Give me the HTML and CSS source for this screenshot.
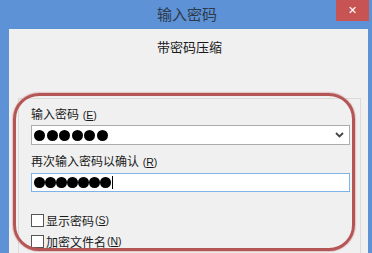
FILE: index.html
```html
<!DOCTYPE html>
<html lang="zh">
<head>
<meta charset="utf-8">
<link rel="stylesheet" href="styles.css">
</head>
<body>
<div class="window">
  <div class="titlebar">
    <span></span>
    <span class="title">输入密码</span>
    <span class="close-wrap"><span class="close">✕</span></span>
  </div>
  <div class="client">
    <div class="subtitle">带密码压缩</div>
    <div class="group">
      <div class="label">输入密码 <span class="mn">(<u>E</u>)</span></div>
      <div class="input combo">
        <span class="dots wide"><i></i><i></i><i></i><i></i><i></i><i></i></span>
        <svg class="chev" width="9" height="6" viewBox="0 0 9 6"><path d="M1 1 L4.5 4.5 L8 1" fill="none" stroke="#444" stroke-width="1.8"/></svg>
      </div>
      <div class="label">再次输入密码以确认 <span class="mn">(<u>R</u>)</span></div>
      <div class="input focus">
        <span class="dots"><i></i><i></i><i></i><i></i><i></i><i></i><i></i></span><span class="caret"></span>
      </div>
      <div class="checks">
        <div class="check"><span class="box"></span>显示密码 <span class="mn">(<u>S</u>)</span></div>
        <div class="check"><span class="box"></span>加密文件名 <span class="mn">(<u>N</u>)</span></div>
      </div>
    </div>
    <div class="annot"></div>
  </div>
</div>
</body>
</html>
```
FILE: styles.css
```css
html, body {
  margin: 0;
  padding: 0;
}
body {
  width: 372px;
  height: 253px;
  overflow: hidden;
  background: #5d92d6;
  font-family: "Noto Sans CJK SC", "Noto Sans", sans-serif;
  color: #1a1a1a;
}
.window {
  display: flex;
  flex-direction: column;
  height: 253px;
}
.titlebar {
  height: 29px;
  display: grid;
  grid-template-columns: 1fr auto 1fr;
  align-items: start;
}
.title {
  font-size: 15px;
  line-height: 27px;
  color: #2e3a4a;
  padding-left: 2px;
}
.close-wrap {
  display: flex;
  justify-content: flex-end;
  padding-right: 3px;
}
.close {
  width: 33px;
  height: 21px;
  background: #c85353;
  color: #fff;
  font-family: "DejaVu Sans", sans-serif;
  font-size: 11px;
  font-weight: bold;
  display: flex;
  align-items: center;
  justify-content: center;
}
.client {
  position: relative;
  flex: 1;
  margin: 0 4px 0 9px;
  background: #f0f0f0;
  display: flex;
  flex-direction: column;
}
.subtitle {
  text-align: center;
  font-size: 13px;
  line-height: 18px;
  margin-top: 9px;
  padding-left: 2px;
}
.group {
  margin: 42px 7px 0 9px;
  flex: 1;
  border: 1px solid #dadada;
  border-bottom: none;
  padding: 6px 10px 0 12px;
  display: flex;
  flex-direction: column;
}
.label {
  font-size: 12px;
  line-height: 18px;
  height: 20px;
}
.mn {
  font-family: "Liberation Sans", sans-serif;
  font-size: 10.5px;
  margin-left: 1px;
}
.input {
  height: 20px;
  box-sizing: border-box;
  background: #fff;
  border: 1px solid #acacac;
  display: flex;
  align-items: center;
  padding-left: 2px;
  margin-bottom: 7px;
}
.input.focus {
  border-color: #7eb4ea;
  height: 19px;
  margin-top: 1px;
}
.combo {
  justify-content: space-between;
  padding-right: 5px;
}
.dots {
  display: flex;
  gap: 0.5px;
}
.dots i {
  display: block;
  width: 10.5px;
  height: 10.5px;
  border-radius: 50%;
  background: #000;
}
.dots.wide {
  gap: 1.5px;
}
.dots.wide i {
  width: 11px;
  height: 11px;
}
.caret {
  width: 1px;
  height: 13px;
  background: #000;
  margin-left: 1px;
}
.checks {
  margin-top: 14px;
  display: flex;
  flex-direction: column;
  gap: 6px;
}
.check {
  display: flex;
  align-items: center;
  font-size: 12px;
  line-height: 15px;
}
.box {
  width: 11px;
  height: 11px;
  border: 1px solid #555;
  background: #fff;
  margin-right: 2px;
}
.annot {
  position: absolute;
  left: 4px;
  top: 64px;
  width: 336px;
  height: 152px;
  border: 3px solid #b55656;
  border-radius: 26px;
  box-shadow: 0 0 1px 1px rgba(200, 110, 110, 0.35);
  pointer-events: none;
}
```
